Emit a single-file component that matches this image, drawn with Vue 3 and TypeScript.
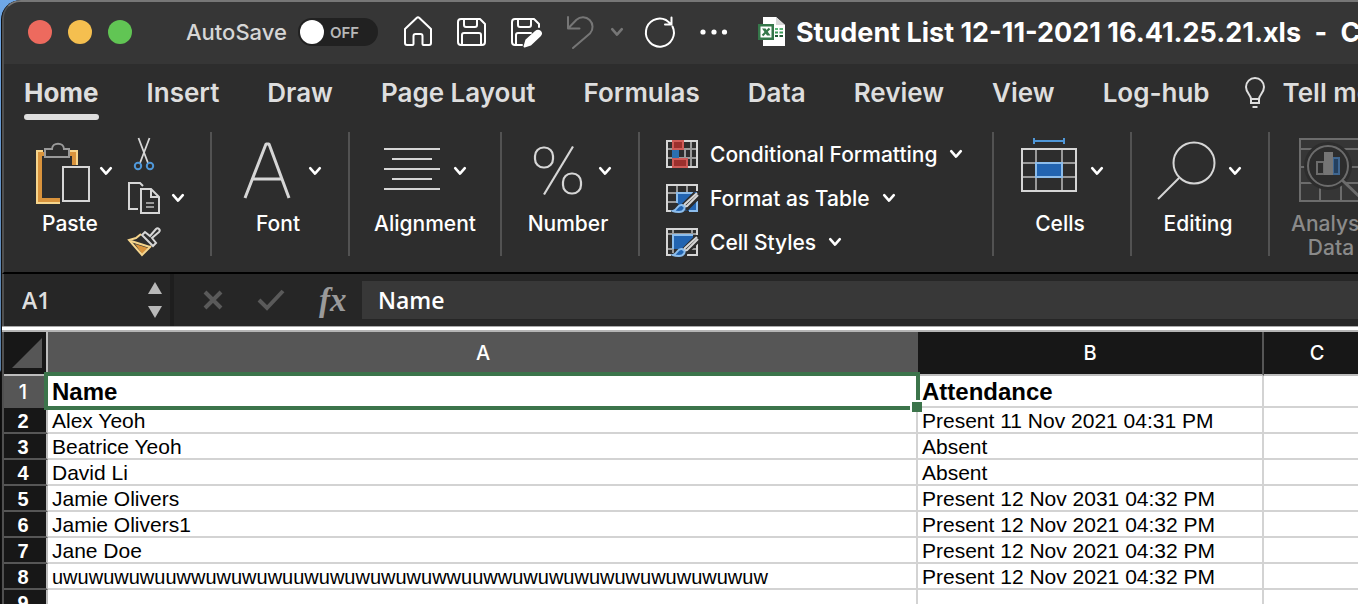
<script setup lang="ts">
import { h, ref } from 'vue'

interface SheetRow {
  name: string
  attendance: string
  kind?: 'head' | 'long'
}

const Chevron = () =>
  h('svg', { class: 'chevron', width: 14, height: 10, viewBox: '0 0 14 10', 'aria-hidden': 'true' }, [
    h('path', {
      d: 'M2.2 2.2L7 7.6l4.8-5.4',
      fill: 'none',
      stroke: 'currentColor',
      'stroke-width': 2.6,
      'stroke-linecap': 'round',
      'stroke-linejoin': 'round',
    }),
  ])

const autoSave = ref(false)
const cellRef = ref('A1')
const formula = ref('Name')
const tabs: string[] = ['Home', 'Insert', 'Draw', 'Page Layout', 'Formulas', 'Data', 'Review', 'View', 'Log-hub']
const activeTab = ref('Home')

const rows: SheetRow[] = [
  { name: 'Name', attendance: 'Attendance', kind: 'head' },
  { name: 'Alex Yeoh', attendance: 'Present 11 Nov 2021 04:31 PM' },
  { name: 'Beatrice Yeoh', attendance: 'Absent' },
  { name: 'David Li', attendance: 'Absent' },
  { name: 'Jamie Olivers', attendance: 'Present 12 Nov 2031 04:32 PM' },
  { name: 'Jamie Olivers1', attendance: 'Present 12 Nov 2021 04:32 PM' },
  { name: 'Jane Doe', attendance: 'Present 12 Nov 2021 04:32 PM' },
  {
    name: 'uwuwuwuwuuwwuwuwuwuuwuwuwuwuwuwwuuwwuwuwuwuwuwuwuwuwuwuw',
    attendance: 'Present 12 Nov 2021 04:32 PM',
    kind: 'long',
  },
  { name: '', attendance: '' },
]
</script>

<template>
  <div class="window">
    <header class="titlebar">
      <div class="lights">
        <button class="light red" aria-label="Close"></button>
        <button class="light amber" aria-label="Minimise"></button>
        <button class="light green" aria-label="Zoom"></button>
      </div>
      <label class="autosave">
        <span class="autosave-text">AutoSave</span>
        <input v-model="autoSave" type="checkbox" class="hidden-check" />
        <span class="toggle"><span class="knob"></span>OFF</span>
      </label>
      <div class="quick">
        <button aria-label="Home">
          <svg width="32" height="32" viewBox="0 0 32 32" class="line"><path d="M3 13L14.6 2a2 2 0 0 1 2.8 0L29 13V27a2 2 0 0 1-2 2h-5.500a1 1 0 0 1-1-1V20a2 2 0 0 0-2-2h-5a2 2 0 0 0-2 2v8a1 1 0 0 1-1 1H5a2 2 0 0 1-2-2z" /></svg>
        </button>
        <button aria-label="Save">
          <svg width="32" height="32" viewBox="0 0 32 32" class="line"><path d="M5 3h19l5 5v18a3 3 0 0 1-3 3H5a3 3 0 0 1-3-3V6a3 3 0 0 1 3-3zM8 3v6a2 2 0 0 0 2 2h9a2 2 0 0 0 2-2V3M6 29V19a2 2 0 0 1 2-2h15a2 2 0 0 1 2 2v10" /></svg>
        </button>
        <button aria-label="Save as">
          <svg width="32" height="32" viewBox="0 0 32 32" class="line">
            <path d="M12 29H5a3 3 0 0 1-3-3V6a3 3 0 0 1 3-3h19l5 5v3M8 3v6a2 2 0 0 0 2 2h9a2 2 0 0 0 2-2V3M6 29V19a2 2 0 0 1 2-2h13" />
            <path d="M14.500 30.500l1.800-6.200L26 15.500a2.700 2.700 0 0 1 4 4L20.500 28.600z" fill="#fff" />
          </svg>
        </button>
        <button aria-label="Undo" class="dim">
          <svg width="32" height="34" viewBox="0 0 32 34" class="line"><path d="M4 2v11.500H15.500M4.500 13L12.500 4.800a9.600 9.600 0 0 1 13.700 13.400L9 33" /></svg>
        </button>
        <button aria-label="Undo history" class="dim undo-more"><Chevron /></button>
        <button aria-label="Redo" class="redo">
          <svg width="32" height="32" viewBox="0 0 32 32" class="line"><path d="M28.500 10.500A14 14 0 1 1 22 4l5 4M27.500 1.500v7h-6.500" /></svg>
        </button>
        <button aria-label="More" class="more">
          <svg width="28" height="8" viewBox="0 0 28 8" fill="#fff"><circle cx="3" cy="4" r="2.600" /><circle cx="14" cy="4" r="2.600" /><circle cx="24.500" cy="4" r="2.600" /></svg>
        </button>
      </div>
      <svg class="doc" width="28" height="32" viewBox="0 0 28 32">
        <path d="M5 1h13l9 8v21H5z" fill="#fff" />
        <path d="M18 1v8h9z" fill="#d8d8d8" />
        <path d="M17 13h3M21.500 13H25" stroke="#5cb87a" stroke-width="2" />
        <path d="M17 16.500h3M21.500 16.500H25" stroke="#3b9a58" stroke-width="2" />
        <path d="M17 20h3M21.500 20H25" stroke="#1f5a34" stroke-width="2" />
        <path d="M0 8h16v16H0z" fill="#35774a" />
        <path d="M2.500 10.500h11v11h-11z" fill="#fff" />
        <path d="M4 12.500h3.500l5 7H9z" fill="#35774a" />
        <path d="M11.500 12.500L4.500 19.500" stroke="#35774a" stroke-width="2.200" />
      </svg>
      <h1 class="title">Student List 12-11-2021 16.41.25.21.xls <span class="dash">-</span> Compatibility Mode</h1>
    </header>

    <nav class="tabs">
      <button v-for="t in tabs" :key="t" class="tab" :class="{ active: t === activeTab }" @click="activeTab = t">{{ t }}</button>
      <button class="tell">
        <svg width="24" height="32" viewBox="0 0 24 32" fill="none" stroke="#dedede" stroke-width="2"><path d="M8 22c0-4-5-6-5-12a9 9 0 0 1 18 0c0 6-5 8-5 12v4H8zM8 22h8M9.500 30h5" /></svg>
        Tell me
      </button>
    </nav>

    <section class="ribbon" aria-label="Ribbon">
      <div class="group clipboard">
        <button class="paste">
          <span class="art">
            <svg width="56" height="78" viewBox="0 0 56 78" fill="none">
              <path d="M9 19H3v52h23" stroke="#f6d58c" stroke-width="2" />
              <path d="M10 22H6v46h20" stroke="#d9933c" stroke-width="4" />
              <path d="M35 19h8v14" stroke="#f6d58c" stroke-width="2" />
              <path d="M35 22h5v11" stroke="#d9933c" stroke-width="4" />
              <path d="M11 25V17h7c0-7 12-7 12 0h5v8z" fill="#2d2d2d" stroke="#9a9a9a" stroke-width="2" />
              <rect x="29" y="35" width="26" height="34" fill="#2d2d2d" stroke="#d6d6d6" stroke-width="2" />
            </svg>
            <Chevron />
          </span>
          <span class="caption">Paste</span>
        </button>
        <div class="clip-tools">
          <button aria-label="Cut">
            <svg width="32" height="32" viewBox="0 0 32 32" fill="none">
              <path d="M10.500 0L20 25M21.500 0L12 25" stroke="#d6d6d6" stroke-width="1.800" />
              <circle cx="10" cy="28" r="3.200" stroke="#4f97d8" stroke-width="2" /><circle cx="22" cy="28" r="3.200" stroke="#4f97d8" stroke-width="2" />
            </svg>
          </button>
          <button aria-label="Copy">
            <svg width="32" height="32" viewBox="0 0 32 32" fill="none" stroke="#d6d6d6" stroke-width="2">
              <path d="M10 27H1V1h11l3 3M13 7h10l8 8v16H13z" /><path d="M23 7v8h8" /><path d="M18 21h8M18 25h8" stroke="#9a9a9a" />
            </svg>
            <Chevron />
          </button>
          <button aria-label="Format painter">
            <svg width="32" height="32" viewBox="0 0 32 32" fill="none" stroke-width="2">
              <path d="M7 18l13 4-6 6z" fill="#d9933c" />
              <path d="M13 8L8 12l-7 2 13 15 9-9" stroke="#f6d58c" /><path d="M3 15l19 6" stroke="#f6d58c" />
              <path d="M14 9l3-3 5 4 6-7a2 2 0 0 1 3 3l-7 6 4 5-3 3z" stroke="#d6d6d6" fill="#2d2d2d" />
            </svg>
          </button>
        </div>
      </div>
      <span class="divider"></span>

      <button class="group small">
        <span class="art">
          <svg width="56" height="78" viewBox="0 0 56 78" fill="none" stroke="#d6d6d6" stroke-width="3"><path d="M6 66L27 12h3l20 54M13 47h30" stroke-linejoin="bevel" /></svg>
          <Chevron />
        </span>
        <span class="caption">Font</span>
      </button>
      <span class="divider"></span>

      <button class="group medium">
        <span class="art">
          <svg width="56" height="78" viewBox="0 0 56 78" stroke="#d6d6d6" stroke-width="2"><path d="M0 17h56M8 27h40M0 37h56M8 47h40M0 57h56" /></svg>
          <Chevron />
        </span>
        <span class="caption">Alignment</span>
      </button>
      <span class="divider"></span>

      <button class="group small">
        <span class="art">
          <svg width="56" height="78" viewBox="0 0 56 78" fill="none" stroke="#d6d6d6" stroke-width="2.200"><rect x="6" y="15.500" width="18" height="20" rx="8.500" /><rect x="34" y="41.500" width="18" height="20" rx="8.500" /><path d="M44 14.500L15 62.500" /></svg>
          <Chevron />
        </span>
        <span class="caption">Number</span>
      </button>
      <span class="divider"></span>

      <div class="group styles">
        <button>
          <svg width="32" height="30" viewBox="0 0 32 30" fill="none" stroke-width="2">
            <path d="M1 10h30M1 19h30M7 1v27M19 10v9M25 1v27" stroke="#9a9a9a" /><rect x="1" y="2" width="30" height="26" stroke="#d6d6d6" />
            <path d="M13 11h5v7h-5z" fill="#2d2d2d" /><rect x="7" y="2" width="10" height="8" fill="#9c302d" stroke="#cf5b57" /><rect x="7" y="20" width="14" height="8" fill="#9c302d" stroke="#cf5b57" /><path d="M6 11h7v8H6z" fill="#2c6fb0" />
          </svg>
          <span>Conditional Formatting</span><Chevron />
        </button>
        <button>
          <svg width="32" height="30" viewBox="0 0 32 30" fill="none" stroke-width="2">
            <path d="M1 10h30M1 19h10M11 2v8M21 2v8" stroke="#9a9a9a" /><path d="M31 8V2H1v26h4" stroke="#d6d6d6" />
            <path d="M11 9h20v19H20L11 20z" fill="#2264b1" /><path d="M11 20V10h16M31 18v10h-8" stroke="#8cbdec" />
            <path d="M31 12L18 25" stroke="#2d2d2d" stroke-width="9" /><path d="M31 10L19 21l-2 3 4-1L32 12" fill="#2d2d2d" stroke="#d6d6d6" />
            <path d="M7 28c5-1 4-7 9-6 5 2 2 7-3 7-3 0-4 0-6-1z" fill="#2264b1" stroke="#8cbdec" />
          </svg>
          <span>Format as Table</span><Chevron />
        </button>
        <button>
          <svg width="32" height="30" viewBox="0 0 32 30" fill="none" stroke-width="2">
            <path d="M1 7h30M7 2v24M26 2v5M1 22h6M22 22h9" stroke="#9a9a9a" /><path d="M31 8V2H1v26h4M31 16v12H21" stroke="#d6d6d6" />
            <path d="M7 7h20v5L16 22H7z" fill="#2264b1" /><path d="M7 22V8h20" stroke="#8cbdec" />
            <path d="M31 12L18 25" stroke="#2d2d2d" stroke-width="8" /><path d="M31 10L19 21l-2 3 4-1L32 12" fill="#2d2d2d" stroke="#d6d6d6" />
            <path d="M7 28c5-1 4-7 9-6 5 2 2 7-3 7-3 0-4 0-6-1z" fill="#2264b1" stroke="#8cbdec" />
          </svg>
          <span>Cell Styles</span><Chevron />
        </button>
      </div>
      <span class="divider"></span>

      <button class="group small">
        <span class="art">
          <svg width="56" height="78" viewBox="0 0 56 78" fill="none" stroke-width="2">
            <path d="M13 9h30M13 6v6M43 6v6" stroke="#4f97d8" /><path d="M1 31h54M1 45h54M15 17v42M41 17v42" stroke="#9a9a9a" />
            <rect x="1" y="17" width="54" height="42" stroke="#d6d6d6" /><rect x="15" y="31" width="26" height="14" fill="#2264b1" stroke="#8cbdec" />
          </svg>
          <Chevron />
        </span>
        <span class="caption">Cells</span>
      </button>
      <span class="divider"></span>

      <button class="group small">
        <span class="art">
          <svg width="56" height="78" viewBox="0 0 56 78" fill="none" stroke="#d6d6d6" stroke-width="2"><circle cx="35" cy="31" r="20.500" /><path d="M20 46L-1 67" /></svg>
          <Chevron />
        </span>
        <span class="caption">Editing</span>
      </button>
      <span class="divider"></span>

      <button class="group analyse" disabled>
        <svg width="64" height="78" viewBox="0 0 64 78" fill="none" stroke="#6c6c6c" stroke-width="2">
          <rect x="1" y="7" width="62" height="62" fill="#363636" /><path d="M1 17h62M1 35h62M1 51h62M21 51v18M42 51v18" />
          <circle cx="29" cy="34" r="24" fill="#2d2d2d" stroke="none" /><circle cx="29" cy="34" r="20" />
          <rect x="18" y="30" width="7" height="12" /><rect x="34" y="26" width="6" height="16" fill="#24405f" stroke="#3f6690" /><path d="M25 20h9v23h-9z" fill="#757575" stroke="none" /><path d="M43 48l21 20" stroke-width="3" />
        </svg>
        <span class="caption">Analyse Data</span>
      </button>
    </section>

    <div class="formula-bar">
      <div class="name-box">
        <input v-model="cellRef" aria-label="Name box" />
        <span class="steps">
          <button aria-label="Previous"><svg width="14" height="12" viewBox="0 0 14 12"><path d="M7 0l7 12H0z" fill="#b9b9b9" /></svg></button>
          <button aria-label="Next"><svg width="14" height="12" viewBox="0 0 14 12"><path d="M0 0h14L7 12z" fill="#b9b9b9" /></svg></button>
        </span>
      </div>
      <div class="formula-tools">
        <button aria-label="Cancel"><svg width="20" height="20" viewBox="0 0 20 20"><path d="M2 2l16 16M18 2L2 18" stroke="#5a5a5a" stroke-width="4" /></svg></button>
        <button aria-label="Enter"><svg width="28" height="22" viewBox="0 0 28 22"><path d="M2 11l8 8L26 2" fill="none" stroke="#5a5a5a" stroke-width="4" /></svg></button>
        <button class="fx">fx</button>
      </div>
      <input v-model="formula" class="formula" aria-label="Formula" />
    </div>
    <div class="splitter"></div>

    <main class="sheet">
      <table>
        <colgroup>
          <col class="c-num" /><col class="c-a" /><col class="c-b" /><col class="c-c" />
        </colgroup>
        <thead>
          <tr>
            <th class="corner" aria-label="Select all"><svg width="30" height="30" viewBox="0 0 30 30"><path d="M30 0v30H0z" fill="#565656" /></svg></th>
            <th class="picked">A</th>
            <th class="col-b">B</th>
            <th>C</th>
          </tr>
        </thead>
        <tbody>
          <tr v-for="(r, i) in rows" :key="i" :class="r.kind">
            <th scope="row">{{ i + 1 }}</th>
            <td>{{ r.name }}<span v-if="i === 0" class="selection"><span class="handle"></span></span></td>
            <td>{{ r.attendance }}</td>
            <td></td>
          </tr>
        </tbody>
      </table>
    </main>
  </div>
</template>

<style>
body {
  margin: 0;
  overflow: hidden;
  background: linear-gradient(#6fa8e8 0, #5a7fa6 370px, #0c0c0c 372px);
}
</style>

<style scoped>
* {
  box-sizing: border-box;
}
.window {
  height: 100vh;
  margin-left: 1px;
  border-left: 1px solid #101010;
  border-top-left-radius: 20px;
  overflow: hidden;
  display: flex;
  flex-direction: column;
  background: #2d2d2d;
  color: #fff;
  font-family: Inter, "Liberation Sans", sans-serif;
}
button {
  display: flex;
  align-items: center;
  flex: none;
  padding: 0;
  border: 0;
  background: none;
  color: inherit;
  font: inherit;
}
svg {
  display: block;
  flex: none;
  overflow: visible;
}
.line {
  fill: none;
  stroke: currentColor;
  stroke-width: 2;
  stroke-linecap: round;
  stroke-linejoin: round;
}
.titlebar,
.tabs,
.ribbon,
.formula-bar,
.sheet {
  border-left: 2px solid #505050;
}
.titlebar {
  display: flex;
  align-items: center;
  flex: none;
  height: 64px;
  padding: 0 0 2px 24px;
  background: #363636;
  border-top: 2px solid #777;
  border-top-left-radius: 18px;
  white-space: nowrap;
}
.lights {
  display: flex;
  gap: 16px;
}
.light {
  width: 24px;
  height: 24px;
  border-radius: 50%;
}
.red { background: #ed6a5e; }
.amber { background: #f5bf4f; }
.green { background: #61c554; }
.autosave {
  position: relative;
  display: flex;
  align-items: center;
  margin-left: 54px;
  font-size: 22px;
  font-weight: 500;
  color: #d6d6d6;
}
.hidden-check {
  position: absolute;
  opacity: 0;
}
.toggle {
  display: flex;
  align-items: center;
  gap: 6px;
  width: 80px;
  height: 28px;
  margin-left: 11px;
  padding-left: 2px;
  border-radius: 14px;
  background: #212121;
  font-size: 15px;
  font-weight: 600;
  color: #b8b8b8;
}
.knob {
  width: 24px;
  height: 24px;
  border-radius: 50%;
  background: #fff;
}
.quick {
  display: flex;
  align-items: center;
  gap: 22px;
  margin-left: 24px;
}
.dim { color: #767676; }
.undo-more { margin-left: -8px; }
.redo { margin-left: -2px; }
.more { margin-left: 2px; }
.doc { margin-left: 30px; }
.title {
  margin: 0 0 0 10px;
  font-size: 27px;
  font-weight: 700;
}
.dash { margin: 0 7px; }

.tabs {
  display: flex;
  flex: none;
  align-items: flex-start;
  gap: 48px;
  padding: 12px 0 12px 20px;
  color: #dedede;
  font-size: 26px;
  font-weight: 600;
  line-height: 34px;
  white-space: nowrap;
}
.tab {
  height: 44px;
  padding-bottom: 10px;
}
.tab.active {
  position: relative;
  font-weight: 700;
}
.tab.active::after {
  content: "";
  position: absolute;
  left: 0;
  right: 0;
  top: 38px;
  height: 6px;
  border-radius: 3px;
  background: #dedede;
}
.tell {
  gap: 16px;
  height: 34px;
  margin-left: -15px;
}

.ribbon {
  display: flex;
  flex: none;
  align-items: flex-start;
  border-bottom: 2px solid #000;
  font-size: 21px;
  font-weight: 500;
}
.divider {
  flex: none;
  width: 2px;
  height: 124px;
  background: #525252;
}
.group {
  flex: none;
}
button.group {
  flex-direction: column;
}
.small { width: 136px; }
.medium { width: 150px; }
.art {
  display: flex;
  align-items: center;
  gap: 13px;
}
.caption {
  line-height: 28px;
}
.small .caption { padding-right: 4px; }
.clipboard {
  display: flex;
  width: 206px;
  padding-left: 30px;
}
.paste {
  flex-direction: column;
  align-items: flex-start;
}
.paste .art { gap: 9px; }
.paste .caption { padding-left: 8px; }
.clip-tools {
  display: flex;
  flex-direction: column;
  gap: 12px;
  margin-left: 15px;
  padding-top: 6px;
}
.clip-tools button { gap: 11px; }
.styles {
  width: 352px;
  padding: 0 0 8px 26px;
}
.styles button {
  height: 44px;
  gap: 12px;
}
.analyse {
  width: 122px;
  color: #8a8a8a;
}
.analyse .caption {
  width: 80px;
  padding-top: 2px;
  line-height: 24px;
}

.formula-bar {
  display: flex;
  flex: none;
  align-items: center;
  height: 52px;
  background: #262626;
}
.formula-bar input {
  min-width: 0;
  border: 0;
  outline: 0;
  background: none;
  color: #fff;
  font: 600 23px "Open Sans", "Noto Sans", sans-serif;
}
.name-box {
  display: flex;
  align-items: center;
  justify-content: space-between;
  width: 170px;
  height: 52px;
  padding: 0 8px 0 18px;
  border-right: 4px solid #1e1e1e;
}
.formula-bar .name-box input {
  width: 100px;
  padding: 0;
  color: #dedede;
}
.steps {
  display: grid;
  gap: 12px;
}
.formula-tools {
  display: flex;
  align-items: center;
  gap: 34px;
  width: 188px;
  padding-left: 29px;
}
.fx {
  color: #9a9a9a;
  font: italic 700 33px "Liberation Serif", serif;
}
.formula-bar .formula {
  flex: 1;
  height: 38px;
  padding: 0 16px;
  background: #383838;
}
.splitter {
  flex: none;
  height: 6px;
  background: #fff;
  border-top: 1px solid #a8a8a8;
  border-bottom: 2px solid #b4b4b4;
}

.sheet {
  flex: 1;
  min-height: 0;
  overflow: hidden;
  background: #fff;
  color: #000;
}
table {
  width: 1366px;
  table-layout: fixed;
  border-collapse: separate;
  border-spacing: 0;
  font-family: "Liberation Sans", Arial, sans-serif;
  font-size: 21px;
}
.c-num { width: 44px; }
.c-a { width: 870px; }
.c-b { width: 346px; }
th {
  padding: 0;
  background: #171717;
  color: #fff;
}
thead th {
  height: 44px;
  border-bottom: 2px solid #bdbdbd;
  font: 500 20px Inter, sans-serif;
}
thead .corner {
  padding: 0 4px 0 8px;
  border-right: 2px solid #bdbdbd;
}
thead .picked { background: #565656; }
thead .col-b { border-right: 2px solid #565656; }
tbody th {
  padding: 2px 4px 0 0;
  border-right: 2px solid #bdbdbd;
  border-bottom: 2px solid #565656;
  font-size: 20px;
  line-height: 22px;
}
tbody .head th {
  background: #565656;
  font-family: Inter, sans-serif;
  font-weight: 500;
}
td {
  position: relative;
  height: 26px;
  padding: 2px 4px 0;
  border-right: 2px solid #d3d3d3;
  border-bottom: 2px solid #d3d3d3;
  line-height: 22px;
  white-space: nowrap;
}
.head td {
  height: 32px;
  font-size: 24px;
  font-weight: 700;
  line-height: 28px;
}
.long td:nth-child(2) { font-size: 20px; }
.selection {
  position: absolute;
  inset: -4px;
  z-index: 1;
  border: 4px solid #3c744b;
}
.handle {
  position: absolute;
  right: -6px;
  bottom: -6px;
  width: 12px;
  height: 12px;
  border: solid #fff;
  border-width: 2px 0 0 2px;
  background: #3c744b;
}
</style>
